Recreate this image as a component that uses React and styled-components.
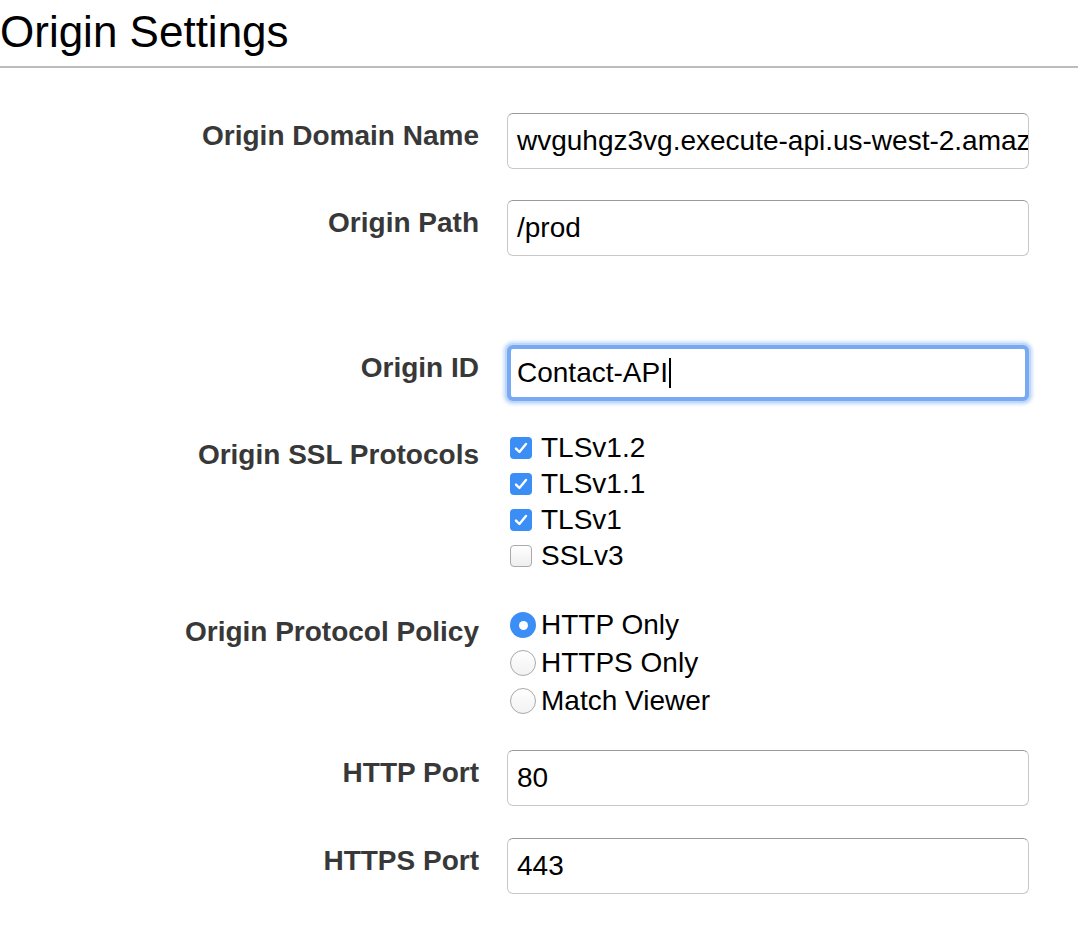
import React from "react";
import styled, { createGlobalStyle } from "styled-components";

const GlobalStyle = createGlobalStyle`
  html, body {
    margin: 0;
    padding: 0;
    background: #fff;
  }
  body {
    font-family: "Liberation Sans", Arial, Helvetica, sans-serif;
    overflow: hidden;
  }
`;

const Page = styled.div`
  width: 1078px;
  height: 932px;
  overflow: hidden;
`;

const Header = styled.div`
  padding: 7px 0 9px 0;
  border-bottom: 2px solid #bcbcbc;
`;

const Title = styled.h1`
  margin: 0;
  font-size: 44px;
  line-height: 50px;
  font-weight: 400;
  color: #000;
`;

const Form = styled.div`
  display: flex;
  flex-direction: column;
  padding-top: 45px;
`;

const Row = styled.div`
  display: grid;
  grid-template-columns: 479px 522px;
  column-gap: 28px;
  margin-top: ${(p) => p.$mt || 0}px;
`;

const Label = styled.div`
  text-align: right;
  font-size: 28px;
  line-height: 32px;
  font-weight: 700;
  color: #383838;
  padding-top: ${(p) => p.$pt || 7}px;
`;

const TextBox = styled.div`
  box-sizing: border-box;
  height: 56px;
  display: flex;
  align-items: center;
  padding: 0 2px 0 ${(p) => (p.$focused ? 6 : 9)}px;
  font-size: 28px;
  line-height: 32px;
  color: #000;
  white-space: nowrap;
  overflow: hidden;
  background: #fff;
  border-radius: 6px;
  border: 1px solid #c9c9c9;
  border-top-color: #999;
  ${(p) =>
    p.$focused &&
    `
    border: 4px solid #78a9f2;
    box-shadow: 0 0 0 2px #c0d8f8, 0 0 3px 4px rgba(170, 205, 248, 0.55);
  `}
`;

const Caret = styled.span`
  display: inline-block;
  width: 2px;
  height: 30px;
  background: #000;
  margin-left: 1px;
`;

const OptionList = styled.div`
  display: flex;
  flex-direction: column;
`;

const Option = styled.div`
  display: flex;
  align-items: center;
  height: ${(p) => p.$h}px;
  font-size: 28px;
  color: #000;
  white-space: nowrap;
`;

const CheckBox = styled.span`
  box-sizing: border-box;
  width: 22px;
  height: 22px;
  margin: 0 9px 0 3px;
  border-radius: 4px;
  display: flex;
  align-items: center;
  justify-content: center;
  background: ${(p) =>
    p.$checked ? "#3b8ef5" : "linear-gradient(#ffffff, #eeeeee)"};
  border: ${(p) => (p.$checked ? "none" : "1px solid #a9a9a9")};
`;

const Radio = styled.span`
  box-sizing: border-box;
  width: 26px;
  height: 26px;
  margin: 0 5px 0 3px;
  border-radius: 50%;
  display: flex;
  align-items: center;
  justify-content: center;
  background: ${(p) =>
    p.$checked ? "#3b8ef5" : "linear-gradient(#ffffff, #f2f2f2)"};
  border: ${(p) => (p.$checked ? "none" : "1px solid #a9a9a9")};
`;

const Dot = styled.span`
  width: 9px;
  height: 9px;
  border-radius: 50%;
  background: #fff;
`;

const Check = () => (
  <svg width="18" height="18" viewBox="0 0 18 18">
    <path
      d="M4 9.6 L7.4 13 L14 5"
      fill="none"
      stroke="#fff"
      strokeWidth="2.4"
      strokeLinecap="round"
      strokeLinejoin="round"
    />
  </svg>
);

const protocols = [
  { name: "TLSv1.2", on: true },
  { name: "TLSv1.1", on: true },
  { name: "TLSv1", on: true },
  { name: "SSLv3", on: false },
];

const policies = [
  { name: "HTTP Only", on: true },
  { name: "HTTPS Only", on: false },
  { name: "Match Viewer", on: false },
];

export default function App() {
  return (
    <Page>
      <GlobalStyle />
      <Header>
        <Title>Origin Settings</Title>
      </Header>
      <Form>
        <Row>
          <Label>Origin Domain Name</Label>
          <TextBox>wvguhgz3vg.execute-api.us-west-2.amazonaws.com</TextBox>
        </Row>
        <Row $mt={31}>
          <Label>Origin Path</Label>
          <TextBox>/prod</TextBox>
        </Row>
        <Row $mt={89}>
          <Label>Origin ID</Label>
          <TextBox $focused>
            Contact-API
            <Caret />
          </TextBox>
        </Row>
        <Row $mt={29}>
          <Label $pt={9}>Origin SSL Protocols</Label>
          <OptionList>
            {protocols.map((p) => (
              <Option key={p.name} $h={36}>
                <CheckBox $checked={p.on}>{p.on && <Check />}</CheckBox>
                {p.name}
              </Option>
            ))}
          </OptionList>
        </Row>
        <Row $mt={32}>
          <Label $pt={10}>Origin Protocol Policy</Label>
          <OptionList>
            {policies.map((p) => (
              <Option key={p.name} $h={38}>
                <Radio $checked={p.on}>{p.on && <Dot />}</Radio>
                {p.name}
              </Option>
            ))}
          </OptionList>
        </Row>
        <Row $mt={30}>
          <Label>HTTP Port</Label>
          <TextBox>80</TextBox>
        </Row>
        <Row $mt={32}>
          <Label>HTTPS Port</Label>
          <TextBox>443</TextBox>
        </Row>
      </Form>
    </Page>
  );
}
